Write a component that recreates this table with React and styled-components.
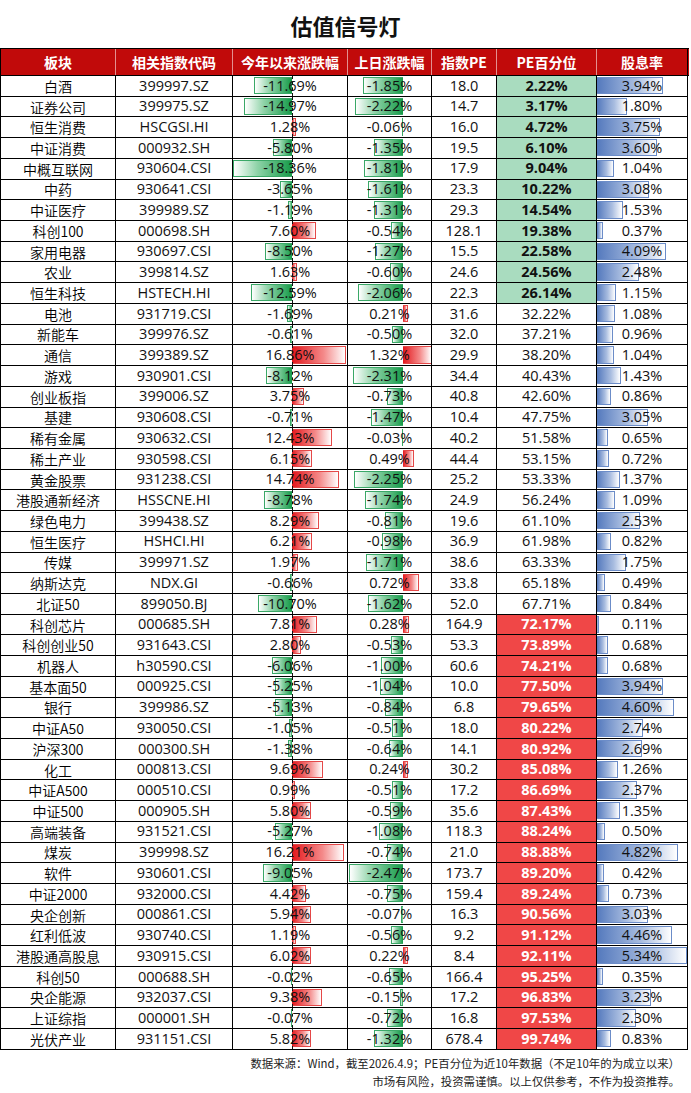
import React from "react";
import styled, { createGlobalStyle } from "styled-components";

const GlobalStyle = createGlobalStyle`
  html, body {
    margin: 0;
    padding: 0;
    background: #fff;
  }
  body {
    font-family: "Open Sans", "Noto Sans CJK SC", sans-serif;
    color: #000;
  }
`;

const COLS = "115px 117px 115px 84px 65px 100px 91px";
const ROW_H = 20.72;

// name, code, ytd, prev day, pe, pe pct, dividend
const rows = [
  ["白酒", "399997.SZ", -11.69, -1.85, "18.0", 2.22, 3.94],
  ["证券公司", "399975.SZ", -14.97, -2.22, "14.7", 3.17, 1.8],
  ["恒生消费", "HSCGSI.HI", 1.28, -0.06, "16.0", 4.72, 3.75],
  ["中证消费", "000932.SH", -5.8, -1.35, "19.5", 6.1, 3.6],
  ["中概互联网", "930604.CSI", -18.36, -1.81, "17.9", 9.04, 1.04],
  ["中药", "930641.CSI", -3.65, -1.61, "23.3", 10.22, 3.08],
  ["中证医疗", "399989.SZ", -1.19, -1.31, "29.3", 14.54, 1.53],
  ["科创100", "000698.SH", 7.6, -0.54, "128.1", 19.38, 0.37],
  ["家用电器", "930697.CSI", -8.5, -1.27, "15.5", 22.58, 4.09],
  ["农业", "399814.SZ", 1.63, -0.6, "24.6", 24.56, 2.48],
  ["恒生科技", "HSTECH.HI", -12.59, -2.06, "22.3", 26.14, 1.15],
  ["电池", "931719.CSI", -1.69, 0.21, "31.6", 32.22, 1.08],
  ["新能车", "399976.SZ", -0.61, -0.5, "32.0", 37.21, 0.96],
  ["通信", "399389.SZ", 16.86, 1.32, "29.9", 38.2, 1.04],
  ["游戏", "930901.CSI", -8.12, -2.31, "34.4", 40.43, 1.43],
  ["创业板指", "399006.SZ", 3.75, -0.73, "40.8", 42.6, 0.86],
  ["基建", "930608.CSI", -0.71, -1.47, "10.4", 47.75, 3.05],
  ["稀有金属", "930632.CSI", 12.43, -0.03, "40.2", 51.58, 0.65],
  ["稀土产业", "930598.CSI", 6.15, 0.49, "44.4", 53.15, 0.72],
  ["黄金股票", "931238.CSI", 14.74, -2.25, "25.2", 53.33, 1.37],
  ["港股通新经济", "HSSCNE.HI", -8.78, -1.74, "24.9", 56.24, 1.09],
  ["绿色电力", "399438.SZ", 8.29, -0.81, "19.6", 61.1, 2.53],
  ["恒生医疗", "HSHCI.HI", 6.21, -0.98, "36.9", 61.98, 0.82],
  ["传媒", "399971.SZ", 1.97, -1.71, "38.6", 63.33, 1.75],
  ["纳斯达克", "NDX.GI", -0.66, 0.72, "33.8", 65.18, 0.49],
  ["北证50", "899050.BJ", -10.7, -1.62, "52.0", 67.71, 0.84],
  ["科创芯片", "000685.SH", 7.81, 0.28, "164.9", 72.17, 0.11],
  ["科创创业50", "931643.CSI", 2.8, -0.53, "53.3", 73.89, 0.68],
  ["机器人", "h30590.CSI", -6.06, -1.0, "60.6", 74.21, 0.68],
  ["基本面50", "000925.CSI", -5.25, -1.04, "10.0", 77.5, 3.94],
  ["银行", "399986.SZ", -5.13, -0.84, "6.8", 79.65, 4.6],
  ["中证A50", "930050.CSI", -1.05, -0.51, "18.0", 80.22, 2.74],
  ["沪深300", "000300.SH", -1.38, -0.64, "14.1", 80.92, 2.69],
  ["化工", "000813.CSI", 9.69, 0.24, "30.2", 85.08, 1.26],
  ["中证A500", "000510.CSI", 0.99, -0.51, "17.2", 86.69, 2.37],
  ["中证500", "000905.SH", 5.8, -0.59, "35.6", 87.43, 1.35],
  ["高端装备", "931521.CSI", -5.27, -1.08, "118.3", 88.24, 0.5],
  ["煤炭", "399998.SZ", 16.21, -0.74, "21.0", 88.88, 4.82],
  ["软件", "930601.CSI", -9.05, -2.47, "173.7", 89.2, 0.42],
  ["中证2000", "932000.CSI", 4.42, -0.75, "159.4", 89.24, 0.73],
  ["央企创新", "000861.CSI", 5.94, -0.07, "16.3", 90.56, 3.03],
  ["红利低波", "930740.CSI", 1.19, -0.56, "9.2", 91.12, 4.46],
  ["港股通高股息", "930915.CSI", 6.02, 0.22, "8.4", 92.11, 5.34],
  ["科创50", "000688.SH", -0.02, -0.65, "166.4", 95.25, 0.35],
  ["央企能源", "932037.CSI", 9.38, -0.15, "17.2", 96.83, 3.23],
  ["上证综指", "000001.SH", -0.07, -0.72, "16.8", 97.53, 2.3],
  ["光伏产业", "931151.CSI", 5.82, -1.32, "678.4", 99.74, 0.83],
];

const headers = ["板块", "相关指数代码", "今年以来涨跌幅", "上日涨跌幅", "指数PE", "PE百分位", "股息率"];

const Page = styled.div`
  width: 691px;
  padding-bottom: 10px;
`;

const Title = styled.h1`
  margin: 0;
  height: 48px;
  display: flex;
  align-items: center;
  justify-content: center;
  font-family: "Noto Sans CJK SC", sans-serif;
  font-size: 22px;
  font-weight: 700;
  color: #111;
  padding-top: 1px;
  box-sizing: border-box;
`;

const Table = styled.div`
  width: 688px;
  border-left: 1px solid #000;
  border-top: 1px solid #000;
`;

const HeadRow = styled.div`
  display: grid;
  grid-template-columns: ${COLS};
  height: 26px;
  background: #c10a0a;
  border-bottom: 1px solid #000;
`;

const HeadCell = styled.div`
  display: flex;
  align-items: center;
  justify-content: center;
  color: #fff;
  font-family: "Noto Sans CJK SC", sans-serif;
  font-weight: 700;
  font-size: 14px;
  border-right: 1px solid ${(p) => (p.$last ? "#000" : "rgba(255,255,255,0.55)")};
  white-space: nowrap;
`;

const Row = styled.div`
  display: grid;
  grid-template-columns: ${COLS};
  height: ${ROW_H}px;
`;

const Cell = styled.div`
  position: relative;
  display: flex;
  align-items: center;
  justify-content: center;
  box-sizing: border-box;
  border-right: 1px solid #000;
  border-bottom: 1px solid #000;
  font-size: 14.5px;
  line-height: 1;
  white-space: nowrap;
  overflow: hidden;
  background: ${(p) => p.$bg || "#fff"};
  color: ${(p) => p.$color || "#111"};
  font-weight: ${(p) => (p.$bold ? 700 : 400)};

  ${(p) =>
    p.$axis != null &&
    `
    &::after {
      content: "";
      position: absolute;
      left: ${p.$axis}px;
      top: 0;
      bottom: 0;
      border-left: 1px dashed #111;
      z-index: 2;
    }
  `}
`;

const CellText = styled.span`
  position: relative;
  z-index: 1;
`;

const NameText = styled(CellText)`
  font-family: "Noto Sans CJK SC", sans-serif;
  font-size: 14px;
  font-weight: 350;
  color: #000;
`;

const tones = {
  green: "linear-gradient(to left, #159a48, #8fd3a8 60%, #ffffff)",
  red: "linear-gradient(to right, #e3161b, #f48a8a 60%, #ffffff)",
  blue: "linear-gradient(to right, #5479bd, #a9bde0 60%, #ffffff)",
};

const toneBorder = {
  green: "#3aa867",
  red: "#e54848",
  blue: "#6b8cc8",
};

const Bar = styled.div`
  position: absolute;
  top: 1px;
  bottom: 1.5px;
  box-sizing: border-box;
  background: ${(p) => tones[p.$tone]};
  border: 1px solid ${(p) => toneBorder[p.$tone]};
  ${(p) => (p.$tone === "green" ? "border-right: none;" : "border-left: none;")}
`;

const Footer = styled.div`
  text-align: right;
  padding: 4px 11px 0 0;
  font-family: "Noto Sans CJK SC", sans-serif;
  font-size: 11.4px;
  line-height: 18px;
  color: #222;
`;

function SignedBar({ value, axis, scale }) {
  const w = Math.max(Math.abs(value) * scale, 1.5);
  const left = value < 0 ? axis - w : axis;
  return <Bar $tone={value < 0 ? "green" : "red"} style={{ left, width: w }} />;
}

const fmt = (v) => `${v.toFixed(2)}%`;

function peStyle(v) {
  if (v < 30) return { $bg: "#a9dcbf", $bold: true, $color: "#111" };
  if (v > 70) return { $bg: "#f04747", $bold: true, $color: "#fff" };
  return {};
}

export default function App() {
  return (
    <Page>
      <GlobalStyle />
      <Title>估值信号灯</Title>
      <Table>
        <HeadRow>
          {headers.map((h, i) => (
            <HeadCell key={h} $last={i === headers.length - 1}>
              {h}
            </HeadCell>
          ))}
        </HeadRow>
        {rows.map(([name, code, ytd, day, pe, pct, div]) => (
          <Row key={name}>
            <Cell>
              <NameText>{name}</NameText>
            </Cell>
            <Cell>
              <CellText>{code}</CellText>
            </Cell>
            <Cell $axis={59}>
              <SignedBar value={ytd} axis={59} scale={3.22} />
              <CellText>{fmt(ytd)}</CellText>
            </Cell>
            <Cell>
              <SignedBar value={day} axis={55} scale={21.8} />
              <CellText>{fmt(day)}</CellText>
            </Cell>
            <Cell>
              <CellText>{pe}</CellText>
            </Cell>
            <Cell {...peStyle(pct)}>
              <CellText>{fmt(pct)}</CellText>
            </Cell>
            <Cell>
              <Bar $tone="blue" style={{ left: 0, width: Math.max(div * 16.8, 2) }} />
              <CellText>{fmt(div)}</CellText>
            </Cell>
          </Row>
        ))}
      </Table>
      <Footer>
        <div>数据来源：Wind，截至2026.4.9；PE百分位为近10年数据（不足10年的为成立以来）</div>
        <div>市场有风险，投资需谨慎。以上仅供参考，不作为投资推荐。</div>
      </Footer>
    </Page>
  );
}
